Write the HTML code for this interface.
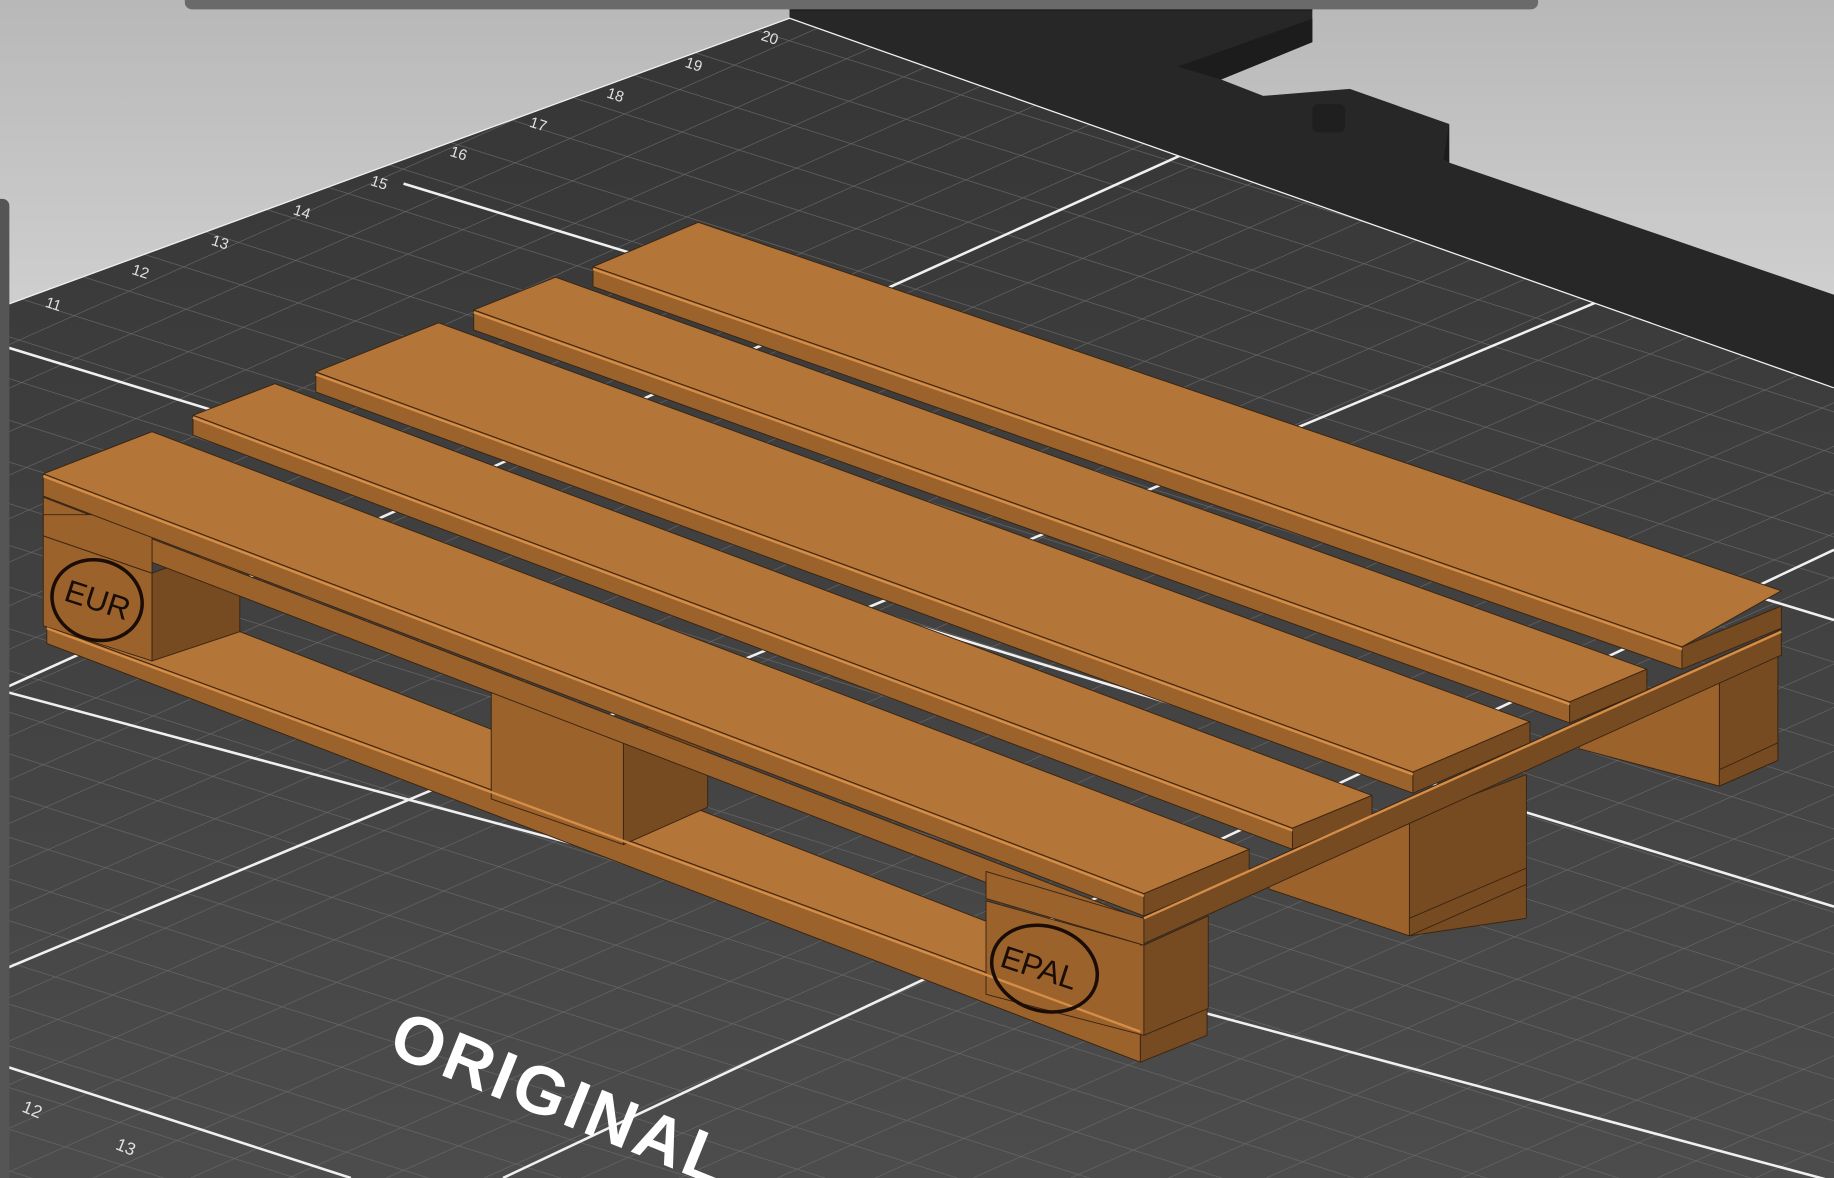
<!DOCTYPE html>
<html><head><meta charset="utf-8"><style>
html,body{margin:0;padding:0;width:1834px;height:1178px;overflow:hidden;background:#3c3c3c}
svg{display:block}
text{font-family:"Liberation Sans",sans-serif}
</style></head><body>
<svg width="1834" height="1178" viewBox="0 0 1568 1007" preserveAspectRatio="none" xmlns="http://www.w3.org/2000/svg">
<defs>
<linearGradient id="bed" x1="0" y1="0" x2="0" y2="1">
<stop offset="0" stop-color="#353535"/><stop offset="1" stop-color="#4c4c4c"/></linearGradient>
<linearGradient id="sky" x1="0" y1="0" x2="0" y2="1">
<stop offset="0" stop-color="#b8b8b8"/><stop offset="1" stop-color="#cfcfcf"/></linearGradient>
<pattern id="ga" width="2000" height="34" patternUnits="userSpaceOnUse" patternTransform="rotate(17.5)">
<line x1="0" y1="0" x2="2000" y2="0" stroke="#6a6a6a" stroke-width="1"/></pattern>
<pattern id="gb" width="34" height="2000" patternUnits="userSpaceOnUse" patternTransform="rotate(66)">
<line x1="0" y1="0" x2="0" y2="2000" stroke="#6a6a6a" stroke-width="1"/></pattern>
</defs>
<rect width="1568" height="1007" fill="url(#bed)"/>
<rect width="1568" height="1007" fill="url(#ga)"/>
<rect width="1568" height="1007" fill="url(#gb)"/>
<g stroke="#f0f0f0" stroke-width="2.2" fill="none">
<line x1="0" y1="295" x2="1568" y2="775"/>
<line x1="0" y1="590" x2="1568" y2="1010"/>
<line x1="345" y1="157" x2="1568" y2="530"/>
<line x1="1020" y1="128" x2="0" y2="590"/>
<line x1="1385" y1="250" x2="0" y2="830"/>
<line x1="1568" y1="470" x2="430" y2="1007"/>
<line x1="0" y1="910" x2="300" y2="1007"/>
<line x1="0" y1="262" x2="675" y2="15"/>
<line x1="675" y1="15" x2="1568" y2="331"/>
</g>
<polygon points="0,0 1568,0 1568,0 675,15 0,262" fill="url(#sky)"/>
<polygon points="675,15 675,0 1568,0 1568,331" fill="#272727"/>
<polygon points="1122,0 1568,0 1568,252 1239,139 1239,106 1154,76 1080,82 1044,68 1122,36" fill="url(#sky)"/>
<polygon points="1007,57 1122,16 1122,36 1044,68" fill="#1c1c1c"/>
<rect x="675" y="0" width="447" height="9" fill="#1a1a1a"/>
<polygon points="1239,106 1239,139 1234,136" fill="#1c1c1c"/>
<rect x="1122" y="89" width="28" height="24" rx="5" fill="#1f1f1f"/>
<g fill="#e0e0e0" font-size="13">
<text x="38" y="262" transform="rotate(18 38 262)">11</text>
<text x="112" y="234" transform="rotate(18 112 234)">12</text>
<text x="180" y="209" transform="rotate(18 180 209)">13</text>
<text x="250" y="183" transform="rotate(18 250 183)">14</text>
<text x="316" y="158" transform="rotate(18 316 158)">15</text>
<text x="384" y="133" transform="rotate(18 384 133)">16</text>
<text x="452" y="108" transform="rotate(18 452 108)">17</text>
<text x="518" y="83" transform="rotate(18 518 83)">18</text>
<text x="585" y="57" transform="rotate(18 585 57)">19</text>
<text x="650" y="34" transform="rotate(18 650 34)">20</text>
<text x="18" y="950" transform="rotate(22 18 950)" font-size="15">12</text>
<text x="98" y="982" transform="rotate(22 98 982)" font-size="15">13</text>
</g>
<text x="330" y="900" transform="rotate(22 330 900)" font-size="58" font-weight="bold" fill="#fff" letter-spacing="3">ORIGINAL</text>
<rect x="158" y="-8" width="1157" height="16" rx="6" fill="#6a6a6a"/>
<rect x="-8" y="170" width="16" height="850" rx="6" fill="#555"/>

<g stroke="#3a2410" stroke-width="0.8" stroke-linejoin="round">
<polygon points="1470,575 1520,555 1520,650 1470,672" fill="#774b22"/>
<polygon points="1350,625 1470,580 1470,672 1350,640" fill="#9b622c"/>
<polygon points="1205,700 1305,662 1305,785 1205,800" fill="#774b22"/>
<polygon points="1085,745 1205,700 1205,800 1085,760" fill="#9b622c"/>
<polygon points="1205,785 1305,742 1305,756 1205,800" fill="#774b22"/>
<polygon points="1470,658 1520,635 1520,650 1470,672" fill="#774b22"/>
<polygon points="40,535 200,538 1030,860 975,880" fill="#b37538"/>
<polygon points="40,535 975,880 975,908 40,550" fill="#9b622c"/>
<polygon points="975,880 1032,858 1032,885 975,908" fill="#774b22"/>
<polygon points="37,458 130,490 130,565 37,535" fill="#9b622c"/>
<polygon points="130,490 205,462 205,540 130,565" fill="#774b22"/>
<polygon points="420,585 533,630 533,722 420,683" fill="#9b622c"/>
<polygon points="533,630 605,602 605,690 533,722" fill="#774b22"/>
<polygon points="843,770 978,808 978,885 843,850" fill="#9b622c"/>
<polygon points="978,808 1033,783 1033,862 978,885" fill="#774b22"/>
<polygon points="37,425 975,785 975,805 37,445" fill="#9b622c"/>
<polygon points="37,440 130,440 130,490 37,458" fill="#9b622c"/>
<polygon points="975,785 1523,538 1523,560 975,808" fill="#774b22"/>
<polygon points="843,745 978,785 978,808 843,768" fill="#9b622c"/>
<polygon points="507,228 597,190 1523,505 1438,553" fill="#b37538"/>
<polygon points="507,228 1438,553 1438,572 507,245" fill="#9b622c"/>
<polygon points="1438,553 1523,518 1523,537 1438,572" fill="#774b22"/>
<polygon points="405,265 475,237 1408,572 1342,600" fill="#b37538"/>
<polygon points="405,265 1342,600 1342,618 405,282" fill="#9b622c"/>
<polygon points="1342,600 1408,572 1408,590 1342,618" fill="#774b22"/>
<polygon points="270,318 375,276 1308,617 1208,660" fill="#b37538"/>
<polygon points="270,318 1208,660 1208,678 270,335" fill="#9b622c"/>
<polygon points="1208,660 1308,617 1308,635 1208,678" fill="#774b22"/>
<polygon points="165,355 235,328 1173,680 1105,708" fill="#b37538"/>
<polygon points="165,355 1105,708 1105,726 165,372" fill="#9b622c"/>
<polygon points="1105,708 1173,680 1173,698 1105,726" fill="#774b22"/>
<polygon points="37,405 130,369 1068,726 978,764" fill="#b37538"/>
<polygon points="37,405 978,764 978,783 37,424" fill="#9b622c"/>
<polygon points="978,764 1068,726 1068,745 978,783" fill="#774b22"/>
</g>
<g stroke="#d58e48" stroke-width="2" fill="none">
<line x1="37" y1="407" x2="978" y2="766"/>
<line x1="165" y1="357" x2="1105" y2="710"/>
<line x1="270" y1="320" x2="1208" y2="662"/>
<line x1="405" y1="267" x2="1342" y2="602"/>
<line x1="507" y1="230" x2="1438" y2="555"/>
<line x1="40" y1="537" x2="975" y2="882"/>
<line x1="978" y1="785" x2="1523" y2="540"/>
</g>
<ellipse cx="83" cy="513" rx="39" ry="34" fill="none" stroke="#1a0d05" stroke-width="3" transform="rotate(18 83 513)"/>
<text x="55" y="522" font-size="27" fill="#1a0d05" transform="rotate(18 83 513)">EUR</text>
<ellipse cx="893" cy="828" rx="46" ry="36" fill="none" stroke="#1a0d05" stroke-width="3" transform="rotate(18 893 828)"/>
<text x="855" y="838" font-size="27" fill="#1a0d05" transform="rotate(18 893 828)">EPAL</text>
</svg>
</body></html>
